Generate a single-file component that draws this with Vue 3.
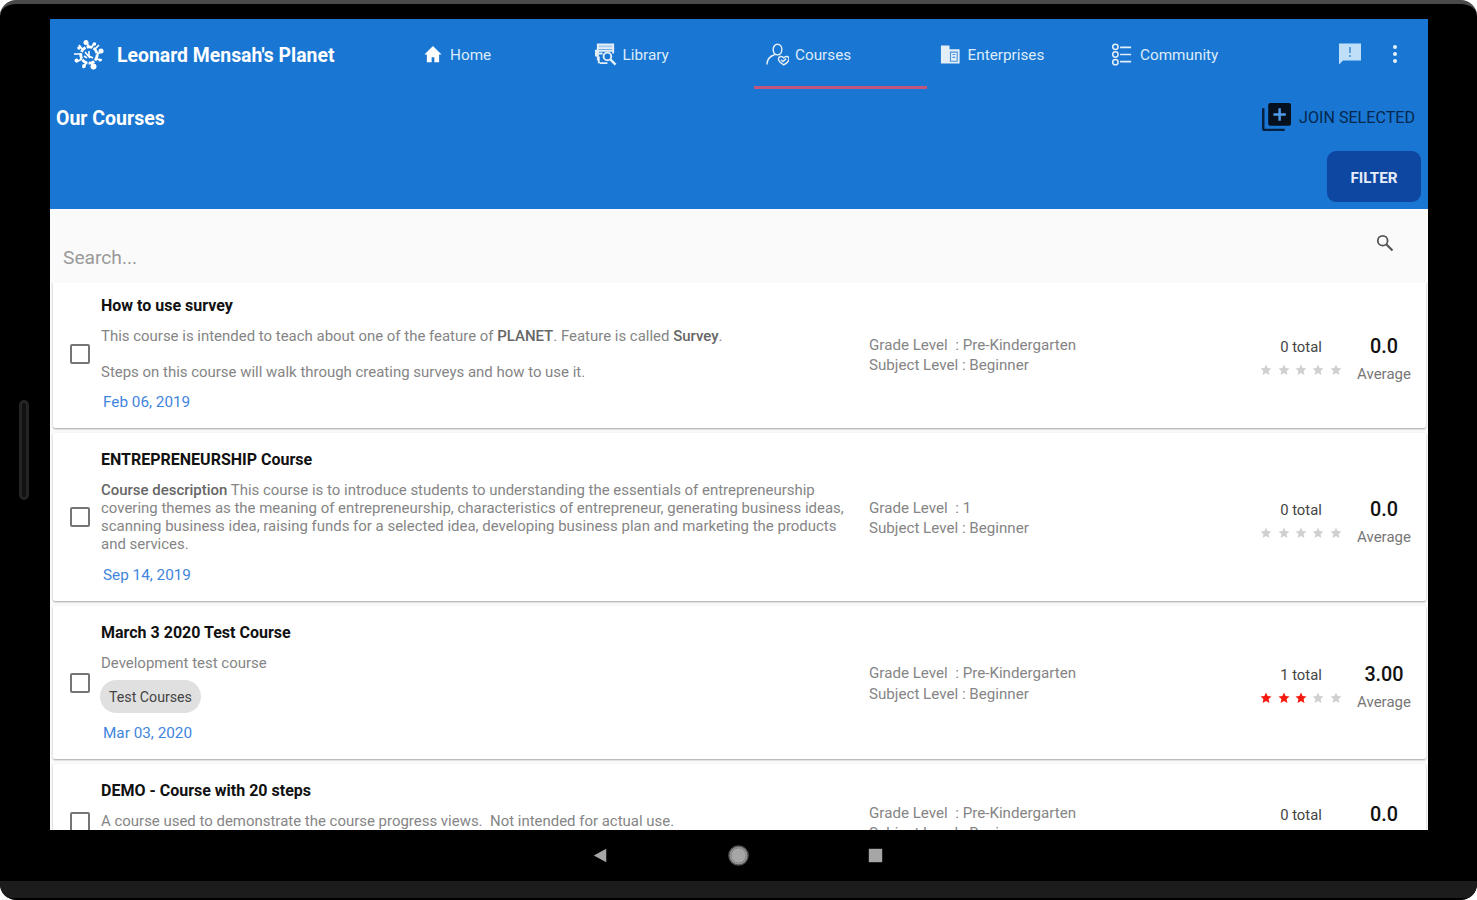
<template>
  <div class="device">
    <div class="device__button"></div>

    <div class="screen">
      <header class="header">
        <div class="header__bar">
          <div class="brand">
            <svg class="brand__logo" viewBox="0 0 32 32" fill="none" stroke="currentColor" aria-hidden="true">
              <circle cx="16" cy="16" r="8.2" stroke-width="2.8" stroke-dasharray="6 1.2" />
              <path d="M12 13l5 6M16 12v5l4 2M14 19l-3-2" stroke-width="1.6" />
              <path d="M16 8L13 2M22 10l4-4M24 15l6-3M23 20l6 1M19 24l2 6M13 24l-3 5M9 20l-6 3M8 15l-7 0M10 11L6 6M19 8l2-4" stroke-width="1.7" />
              <g fill="currentColor" stroke="none">
                <circle cx="13" cy="3.5" r="2.5" />
                <circle cx="28" cy="12" r="2.5" />
                <circle cx="20.5" cy="27.5" r="3" />
                <circle cx="11" cy="27" r="1.9" />
                <circle cx="3.5" cy="21.5" r="2" />
                <circle cx="6" cy="9" r="1.8" />
                <circle cx="21.5" cy="5" r="1.7" />
                <circle cx="27" cy="21" r="1.6" />
              </g>
            </svg>
            <span class="brand__name">Leonard Mensah's Planet</span>
          </div>

          <nav class="tabs">
            <a
              v-for="tab in tabs"
              :key="tab.name"
              class="tab"
              :class="['tab--' + tab.icon, { 'tab--active': tab.active }]"
            >
              <svg v-if="tab.icon === 'home'" class="tab__icon" viewBox="0 0 24 24" fill="currentColor" aria-hidden="true">
                <path d="M12.500 3.200L3.600 12H6.100v8h5v-5.200h2.800V20h5v-8h2.500z" />
              </svg>
              <svg v-else-if="tab.icon === 'library'" class="tab__icon" viewBox="0 0 24 24" fill="none" stroke="currentColor" stroke-width="2" aria-hidden="true">
                <path d="M4 1.500h16v4H4z" fill="currentColor" fill-opacity=".7" />
                <path d="M2 7v6l3 1M2 8h17M1 11h8M4 5v13M6 21h8M5 14v7M20 5v6" />
                <circle cx="14" cy="14" r="4" />
                <path d="M17 17l5.500 5.500" stroke-width="2.600" />
              </svg>
              <svg v-else-if="tab.icon === 'courses'" class="tab__icon" viewBox="0 0 24 24" fill="none" stroke="currentColor" stroke-width="1.500" aria-hidden="true">
                <path d="M12 12.400c-6 0-6-11 0-11s6 11 0 11zM1 22.500c0-5 2.500-8.500 8-10.200" />
                <path d="M18.500 22.800c-3.200-1.800-5.500-3.600-5.500-6 0-3 3.700-3.600 5.500-1.300 1.800-2.300 5.500-1.700 5.500 1.300 0 2.400-2.300 4.200-5.500 6z" />
                <path d="M15.500 17.500l2.300 1.800 3.200-3" />
              </svg>
              <svg v-else-if="tab.icon === 'enterprises'" class="tab__icon" viewBox="0 0 24 24" fill="currentColor" aria-hidden="true">
                <path d="M2 2.500h9v4h10.500v15H2z" />
                <path d="M12 9.500h7v9.500h-7zM14 12h3M14 15h3" fill="none" stroke="#1976d2" stroke-opacity=".75" stroke-width="1.200" />
              </svg>
              <svg v-else class="tab__icon" viewBox="0 0 24 24" fill="none" stroke="currentColor" stroke-width="1.600" aria-hidden="true">
                <circle cx="4.600" cy="4" r="2.800" />
                <circle cx="4.600" cy="12" r="2.800" />
                <circle cx="4.600" cy="20" r="2.800" />
                <path d="M9.500 4.500H21M9.500 12H21M9.500 19.500H21" stroke-width="1.800" />
              </svg>
              <span class="tab__label">{{ tab.name }}</span>
            </a>
          </nav>

          <div class="actions">
            <svg class="actions__feedback" viewBox="0 0 24 24" aria-hidden="true">
              <path d="M1 1.500h22v17H5L1 22.500z" fill="#bfdff8" />
              <path d="M12 5v6M12 13v2" stroke="#5f9fd8" stroke-width="2" />
            </svg>
            <svg class="actions__more" viewBox="0 0 6 20" fill="#e3f2fd" aria-hidden="true">
              <circle cx="3" cy="3" r="2" />
              <circle cx="3" cy="10" r="2" />
              <circle cx="3" cy="17" r="2" />
            </svg>
          </div>
        </div>

        <div class="header__row">
          <h1 class="header__title">Our Courses</h1>
          <button class="join">
            <svg class="join__icon" viewBox="0 0 28 28" aria-hidden="true">
              <path d="M8 1h18a2 2 0 0 1 2 2v18a2 2 0 0 1-2 2H8a2 2 0 0 1-2-2V3a2 2 0 0 1 2-2z" fill="#04101e" />
              <path d="M1.200 6v19.500a1.500 1.500 0 0 0 1.500 1.500H22" fill="none" stroke="#06213f" stroke-width="2.400" />
              <path d="M17 6v12M11 12h12" stroke="#4d9be8" stroke-width="2.400" />
            </svg>
            <span>JOIN SELECTED</span>
          </button>
        </div>

        <div class="header__filter">
          <button class="filter">FILTER</button>
        </div>
      </header>

      <div class="search">
        <span class="search__hint">Search...</span>
        <svg class="search__icon" viewBox="0 0 18 18" fill="none" stroke="#555" aria-hidden="true">
          <circle cx="6.700" cy="6.700" r="4.900" stroke-width="1.800" />
          <path d="M10.500 10.500l6 6" stroke-width="2.200" />
        </svg>
      </div>

      <main class="list">
        <article v-for="course in courses" :key="course.title" class="card">
          <span class="card__check"></span>

          <div class="card__body">
            <h2 class="card__title">{{ course.title }}</h2>
            <p class="card__desc">
              <span v-for="(line, i) in course.lines" :key="i" class="card__line">
                <template v-for="(part, j) in line" :key="j">
                  <b v-if="part.bold">{{ part.text }}</b>
                  <template v-else>{{ part.text }}</template>
                </template>
              </span>
            </p>
            <span v-if="course.tag" class="chip">{{ course.tag }}</span>
            <time class="card__date">{{ course.date }}</time>
          </div>

          <div class="card__levels">
            <div>Grade Level &nbsp;: {{ course.grade }}</div>
            <div>Subject Level : Beginner</div>
          </div>

          <div class="votes">
            <span class="votes__total">{{ course.total }} total</span>
            <div class="votes__stars">
              <svg
                v-for="n in 5"
                :key="n"
                class="star"
                :class="{ 'star--on': n <= course.stars }"
                viewBox="0 0 12 12"
                aria-hidden="true"
              >
                <path d="M6 .5l1.600 3.600 3.900.4-2.900 2.600.8 3.900L6 9l-3.400 2 .8-3.900L.5 4.500l3.900-.4z" />
              </svg>
            </div>
          </div>

          <div class="average">
            <span class="average__value">{{ course.average }}</span>
            <span class="average__label">Average</span>
          </div>
        </article>
      </main>
    </div>

    <div class="navbar">
      <svg class="navbar__icon" viewBox="0 0 24 24" fill="#a6a6a6" aria-hidden="true">
        <path d="M18 5v14L5 12z" />
      </svg>
      <svg class="navbar__icon" viewBox="0 0 24 24" fill="#a6a6a6" aria-hidden="true">
        <circle cx="12" cy="12" r="10" stroke="#555" stroke-width="1.500" />
        <circle cx="12" cy="12" r="8" fill="none" stroke="#777" stroke-width="1" />
      </svg>
      <svg class="navbar__icon" viewBox="0 0 24 24" fill="#a6a6a6" aria-hidden="true">
        <path d="M5 5h14v14H5z" />
      </svg>
    </div>
    <div class="device__edge"></div>
  </div>
</template>

<script setup>
const tabs = [
  { name: 'Home', icon: 'home' },
  { name: 'Library', icon: 'library' },
  { name: 'Courses', icon: 'courses', active: true },
  { name: 'Enterprises', icon: 'enterprises' },
  { name: 'Community', icon: 'community' },
]

const courses = [
  {
    title: 'How to use survey',
    lines: [
      [
        { text: 'This course is intended to teach about one of the feature of ' },
        { text: 'PLANET', bold: true },
        { text: '. Feature is called ' },
        { text: 'Survey', bold: true },
        { text: '.' },
      ],
      [{ text: '\u00a0' }],
      [{ text: 'Steps on this course will walk through creating surveys and how to use it.' }],
    ],
    date: 'Feb 06, 2019',
    grade: 'Pre-Kindergarten',
    total: 0,
    stars: 0,
    average: '0.0',
  },
  {
    title: 'ENTREPRENEURSHIP Course',
    lines: [
      [
        { text: 'Course description', bold: true },
        { text: ' This course is to introduce students to understanding the essentials of entrepreneurship' },
      ],
      [{ text: 'covering themes as the meaning of entrepreneurship, characteristics of entrepreneur, generating business ideas,' }],
      [{ text: 'scanning business idea, raising funds for a selected idea, developing business plan and marketing the products' }],
      [{ text: 'and services.' }],
    ],
    date: 'Sep 14, 2019',
    grade: '1',
    total: 0,
    stars: 0,
    average: '0.0',
  },
  {
    title: 'March 3 2020 Test Course',
    lines: [[{ text: 'Development test course' }]],
    tag: 'Test Courses',
    date: 'Mar 03, 2020',
    grade: 'Pre-Kindergarten',
    total: 1,
    stars: 3,
    average: '3.00',
  },
  {
    title: 'DEMO - Course with 20 steps',
    lines: [[{ text: 'A course used to demonstrate the course progress views.\u00a0 Not intended for actual use.' }]],
    grade: 'Pre-Kindergarten',
    total: 0,
    stars: 0,
    average: '0.0',
  },
]
</script>

<style>
body {
  background: #fff;
}
</style>

<style scoped>
.device {
  position: relative;
  box-sizing: border-box;
  width: 1477px;
  height: 900px;
  padding: 15px 49px 0 50px;
  display: flex;
  flex-direction: column;
  overflow: hidden;
  background: #000;
  border-top: 4px solid #4a4a4a;
  border-radius: 16px;
  font-family: Roboto, 'Liberation Sans', sans-serif;
}

.device__button {
  position: absolute;
  left: 19px;
  top: 396px;
  box-sizing: border-box;
  width: 10px;
  height: 100px;
  border-radius: 5px;
  background: #111;
  border: 3px solid #242424;
}

.device__edge {
  flex: none;
  height: 17px;
  margin: 0 -49px 2px -50px;
  background: #1c1c1c;
}

.screen {
  flex: none;
  height: 811px;
  overflow: hidden;
  background: #fafafa;
}

.header {
  box-sizing: border-box;
  height: 190px;
  background: #1976d2;
  color: #fff;
}

.header__bar {
  display: flex;
  height: 70px;
}

.brand {
  display: flex;
  align-items: center;
  box-sizing: border-box;
  width: 359px;
  padding: 2px 0 0 23px;
}

.brand__logo {
  width: 32px;
  height: 32px;
  margin-right: 12px;
}

.brand__name {
  font-size: 19.4px;
  font-weight: 700;
  white-space: nowrap;
}

.tabs {
  display: grid;
  grid-template-columns: repeat(5, 172.5px);
}

.tab {
  display: flex;
  align-items: center;
  gap: 6px;
  box-sizing: border-box;
  padding: 4px 0 0 12px;
  border-bottom: 3px solid transparent;
}

.tab--active {
  border-bottom-color: #c2567f;
}

.tab__icon {
  flex: none;
  width: 23px;
  height: 23px;
  opacity: 0.88;
}

.tab--home .tab__icon {
  opacity: 1;
}

.tab__label {
  font-size: 15.3px;
  color: #dcecfb;
  white-space: nowrap;
}

.actions {
  display: flex;
  align-items: center;
  gap: 30px;
  padding-left: 66px;
}

.actions__feedback {
  width: 24px;
  height: 24px;
}

.actions__more {
  width: 6px;
  height: 20px;
}

.header__row {
  display: flex;
  align-items: center;
  justify-content: space-between;
  height: 56px;
  padding: 0 13px 0 6px;
}

.header__title {
  margin: 2px 0 0;
  font-size: 19.5px;
  font-weight: 700;
}

.join {
  display: flex;
  align-items: center;
  gap: 8px;
  padding: 0;
  border: 0;
  background: none;
  font-family: inherit;
  font-size: 16.1px;
  color: #05284e;
  white-space: nowrap;
}

.join__icon {
  width: 29px;
  height: 29px;
  margin-top: -2px;
}

.header__filter {
  display: flex;
  justify-content: flex-end;
  padding: 6px 7px 0 0;
}

.filter {
  width: 94px;
  height: 51px;
  padding: 2px 0 0;
  border: 0;
  border-radius: 9px;
  background: #0d47a1;
  font-family: inherit;
  font-size: 15.2px;
  font-weight: 700;
  color: #e6ecfa;
}

.search {
  position: relative;
  z-index: 1;
  display: flex;
  justify-content: space-between;
  box-sizing: border-box;
  height: 74px;
  padding: 25px 34px 0 13px;
  background: #fafafa;
}

.search__hint {
  margin-top: 12px;
  font-size: 19.2px;
  line-height: 24px;
  color: #999;
}

.search__icon {
  width: 18px;
  height: 18px;
}

.list {
  display: flex;
  flex-direction: column;
  gap: 5px;
  margin-top: -4px;
  padding: 0 2px 0 3px;
}

.card {
  display: flex;
  align-items: center;
  box-sizing: border-box;
  min-height: 115px;
  padding: 17px 14px 16px 17px;
  background: #fff;
  border-radius: 2px;
  box-shadow: 0 1px 2px rgba(0, 0, 0, 0.34);
}

.card__check {
  flex: none;
  box-sizing: border-box;
  width: 20px;
  height: 20px;
  border: 2px solid #757575;
  border-radius: 2px;
}

.card__body {
  flex: none;
  align-self: flex-start;
  width: 768px;
  margin-left: 11px;
}

.card__title {
  margin: 0 0 12px;
  font-size: 16px;
  line-height: 20px;
  font-weight: 700;
  color: #111;
}

.card__desc {
  margin: 0;
  font-size: 14.96px;
  line-height: 17.8px;
  color: #858585;
}

.card__desc b {
  font-weight: 500;
  color: #666;
}

.card__line {
  display: block;
  white-space: pre;
}

.chip {
  display: flex;
  align-items: center;
  justify-content: center;
  width: 101px;
  height: 33px;
  margin: 8px 0 -1px -1px;
  border-radius: 17px;
  background: #e0e0e0;
  font-size: 14.2px;
  color: #444;
}

.card__date {
  display: block;
  margin: 11px 0 0 2px;
  font-size: 15.3px;
  line-height: 20px;
  color: #4285dc;
}

.card__levels {
  flex: 1;
  padding-top: 2px;
  font-size: 15.15px;
  line-height: 20.5px;
  color: #858585;
  white-space: nowrap;
}

.votes {
  display: flex;
  flex-direction: column;
  align-items: center;
  gap: 7px;
  width: 82px;
  padding-top: 4px;
}

.votes__total {
  font-size: 14.8px;
  line-height: 20px;
  color: #444;
}

.votes__stars {
  display: flex;
  gap: 5.3px;
}

.star {
  width: 12px;
  height: 12px;
  fill: #d0d0d0;
}

.star--on {
  fill: #f5190f;
}

.average {
  display: flex;
  flex-direction: column;
  align-items: center;
  width: 56px;
  margin-left: 14px;
  padding-top: 11px;
}

.average__value {
  font-size: 19.8px;
  line-height: 28px;
  font-weight: 500;
  color: #111;
}

.average__label {
  font-size: 15px;
  line-height: 26px;
  color: #777;
}

.navbar {
  flex: none;
  display: flex;
  align-items: center;
  justify-content: center;
  gap: 114.5px;
  height: 51px;
  padding-right: 2px;
}

.navbar__icon {
  width: 23px;
  height: 23px;
}
</style>
